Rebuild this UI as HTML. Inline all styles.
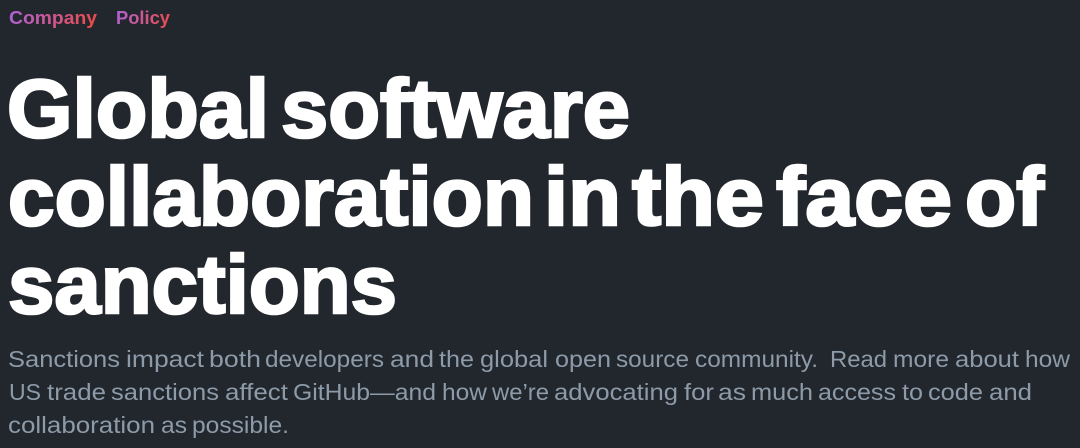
<!DOCTYPE html>
<html lang="en">
<head>
<meta charset="utf-8">
<title>Global software collaboration in the face of sanctions</title>
<style>
html,body{margin:0;padding:0;width:1080px;height:448px;background:#22272e;overflow:hidden}
svg{display:block}
text{white-space:pre}
.k{font-family:"Liberation Sans",sans-serif;font-weight:700;font-size:18px}
.h{font-family:"Liberation Sans",sans-serif;font-weight:700;font-size:83px;fill:#fff;stroke:#fff;stroke-width:2.6px;stroke-linejoin:miter}
.b{font-family:"Liberation Sans",sans-serif;font-size:23px;fill:#8d9aa8}
</style>
</head>
<body>
<svg width="1080" height="448" viewBox="0 0 1080 448" xmlns="http://www.w3.org/2000/svg">
<defs>
<linearGradient id="g1" gradientUnits="userSpaceOnUse" x1="10" y1="8" x2="95" y2="30"><stop offset="0" stop-color="#ae62d6"/><stop offset="1" stop-color="#ec4a46"/></linearGradient>
<linearGradient id="g2" gradientUnits="userSpaceOnUse" x1="116" y1="8" x2="170" y2="30"><stop offset="0" stop-color="#ae62d6"/><stop offset="1" stop-color="#ec4a46"/></linearGradient>
</defs>
<text class="k" x="9" y="24" fill="url(#g1)" textLength="88" lengthAdjust="spacingAndGlyphs">Company</text>
<text class="k" x="116" y="24" fill="url(#g2)" textLength="54" lengthAdjust="spacingAndGlyphs">Policy</text>

<text class="h" x="7" y="137" textLength="262" lengthAdjust="spacingAndGlyphs">Global</text>
<text class="h" x="281" y="137" textLength="349" lengthAdjust="spacingAndGlyphs">software</text>
<text class="h" x="8" y="225" textLength="526" lengthAdjust="spacingAndGlyphs">collaboration</text>
<text class="h" x="544" y="225" textLength="77" lengthAdjust="spacingAndGlyphs">in</text>
<text class="h" x="632" y="225" textLength="132" lengthAdjust="spacingAndGlyphs">the</text>
<text class="h" x="776" y="225" textLength="176" lengthAdjust="spacingAndGlyphs">face</text>
<text class="h" x="965" y="225" textLength="79" lengthAdjust="spacingAndGlyphs">of</text>
<text class="h" x="8" y="313" textLength="389" lengthAdjust="spacingAndGlyphs">sanctions</text>

<text class="b" x="8" y="367" textLength="112" lengthAdjust="spacingAndGlyphs">Sanctions</text>
<text class="b" x="126" y="367" textLength="78" lengthAdjust="spacingAndGlyphs">impact</text>
<text class="b" x="209" y="367" textLength="52" lengthAdjust="spacingAndGlyphs">both</text>
<text class="b" x="265" y="367" textLength="119" lengthAdjust="spacingAndGlyphs">developers</text>
<text class="b" x="390" y="367" textLength="44" lengthAdjust="spacingAndGlyphs">and</text>
<text class="b" x="439" y="367" textLength="35" lengthAdjust="spacingAndGlyphs">the</text>
<text class="b" x="480" y="367" textLength="68" lengthAdjust="spacingAndGlyphs">global</text>
<text class="b" x="555" y="367" textLength="56" lengthAdjust="spacingAndGlyphs">open</text>
<text class="b" x="616" y="367" textLength="73" lengthAdjust="spacingAndGlyphs">source</text>
<text class="b" x="695" y="367" textLength="123" lengthAdjust="spacingAndGlyphs">community.</text>
<text class="b" x="830" y="367" textLength="57" lengthAdjust="spacingAndGlyphs">Read</text>
<text class="b" x="893" y="367" textLength="56" lengthAdjust="spacingAndGlyphs">more</text>
<text class="b" x="955" y="367" textLength="64" lengthAdjust="spacingAndGlyphs">about</text>
<text class="b" x="1025" y="367" textLength="45" lengthAdjust="spacingAndGlyphs">how</text>

<text class="b" x="9" y="400" textLength="32" lengthAdjust="spacingAndGlyphs">US</text>
<text class="b" x="47" y="400" textLength="59" lengthAdjust="spacingAndGlyphs">trade</text>
<text class="b" x="111" y="400" textLength="108" lengthAdjust="spacingAndGlyphs">sanctions</text>
<text class="b" x="225" y="400" textLength="63" lengthAdjust="spacingAndGlyphs">affect</text>
<text class="b" x="293" y="400" textLength="143" lengthAdjust="spacingAndGlyphs">GitHub—and</text>
<text class="b" x="442" y="400" textLength="45" lengthAdjust="spacingAndGlyphs">how</text>
<text class="b" x="492" y="400" textLength="57" lengthAdjust="spacingAndGlyphs">we’re</text>
<text class="b" x="554" y="400" textLength="124" lengthAdjust="spacingAndGlyphs">advocating</text>
<text class="b" x="684" y="400" textLength="30" lengthAdjust="spacingAndGlyphs">for</text>
<text class="b" x="718" y="400" textLength="28" lengthAdjust="spacingAndGlyphs">as</text>
<text class="b" x="751" y="400" textLength="62" lengthAdjust="spacingAndGlyphs">much</text>
<text class="b" x="818" y="400" textLength="78" lengthAdjust="spacingAndGlyphs">access</text>
<text class="b" x="902" y="400" textLength="21" lengthAdjust="spacingAndGlyphs">to</text>
<text class="b" x="928" y="400" textLength="55" lengthAdjust="spacingAndGlyphs">code</text>
<text class="b" x="989" y="400" textLength="43" lengthAdjust="spacingAndGlyphs">and</text>

<text class="b" x="8" y="433" textLength="147" lengthAdjust="spacingAndGlyphs">collaboration</text>
<text class="b" x="161" y="433" textLength="26" lengthAdjust="spacingAndGlyphs">as</text>
<text class="b" x="192" y="433" textLength="97" lengthAdjust="spacingAndGlyphs">possible.</text>
</svg>
</body>
</html>
